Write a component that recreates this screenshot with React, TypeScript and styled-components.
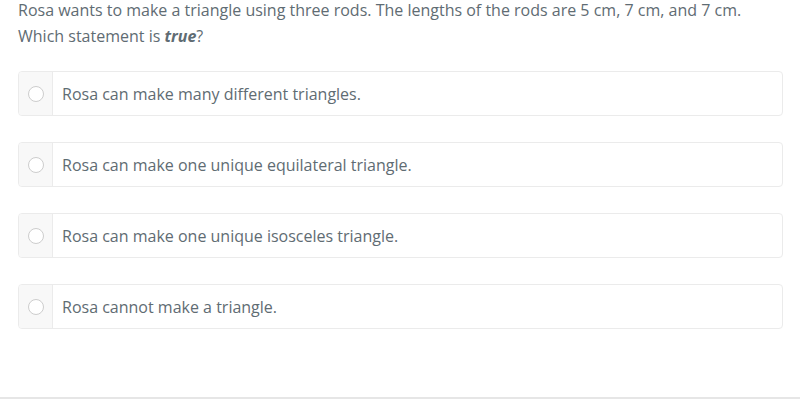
import React from 'react'
import styled, { createGlobalStyle } from 'styled-components'

const GlobalStyle = createGlobalStyle`
    html, body {
        margin: 0;
        padding: 0;
        background: #ffffff;
    }
    body {
        font-family: "Open Sans", "Noto Sans", sans-serif;
        color: #5f6c73;
    }
`

const Page = styled.div`
    width: 800px;
    height: 399px;
    box-sizing: border-box;
    display: flex;
    flex-direction: column;
    border-bottom: 2px solid #e6e6e6;
`

const Question = styled.p`
    margin: -3px 0 0;
    padding: 0 17px 0 18px;
    font-size: 16px;
    line-height: 26px;
`

const Options = styled.div`
    display: flex;
    flex-direction: column;
    gap: 26px;
    padding: 0 17px 0 18px;
    margin-top: 22px;
`

const Card = styled.label`
    display: flex;
    height: 45px;
    box-sizing: border-box;
    border: 1px solid #ebebeb;
    border-radius: 4px;
    overflow: hidden;
    cursor: pointer;
`

const RadioCell = styled.div`
    width: 33px;
    flex: none;
    display: flex;
    align-items: center;
    justify-content: center;
    background: #f8f8f8;
    border-right: 1px solid #ebebeb;
`

const Radio = styled.span`
    width: 14px;
    height: 14px;
    border-radius: 50%;
    border: 1px solid #cdcdcd;
    background: #ffffff;
`

const OptionText = styled.span`
    display: flex;
    align-items: center;
    padding-left: 9px;
    font-size: 16px;
`

const options = [
    'Rosa can make many different triangles.',
    'Rosa can make one unique equilateral triangle.',
    'Rosa can make one unique isosceles triangle.',
    'Rosa cannot make a triangle.',
]

const App = () => {
    return (
        <Page>
            <GlobalStyle />
            <Question>
                Rosa wants to make a triangle using three rods. The lengths of the rods are 5 cm, 7 cm, and 7 cm.
                Which statement is <b><i>true</i></b>?
            </Question>
            <Options>
                {options.map((text, key) => (
                    <Card key={key}>
                        <RadioCell>
                            <Radio />
                        </RadioCell>
                        <OptionText>{text}</OptionText>
                    </Card>
                ))}
            </Options>
        </Page>
    )
}

export default App
